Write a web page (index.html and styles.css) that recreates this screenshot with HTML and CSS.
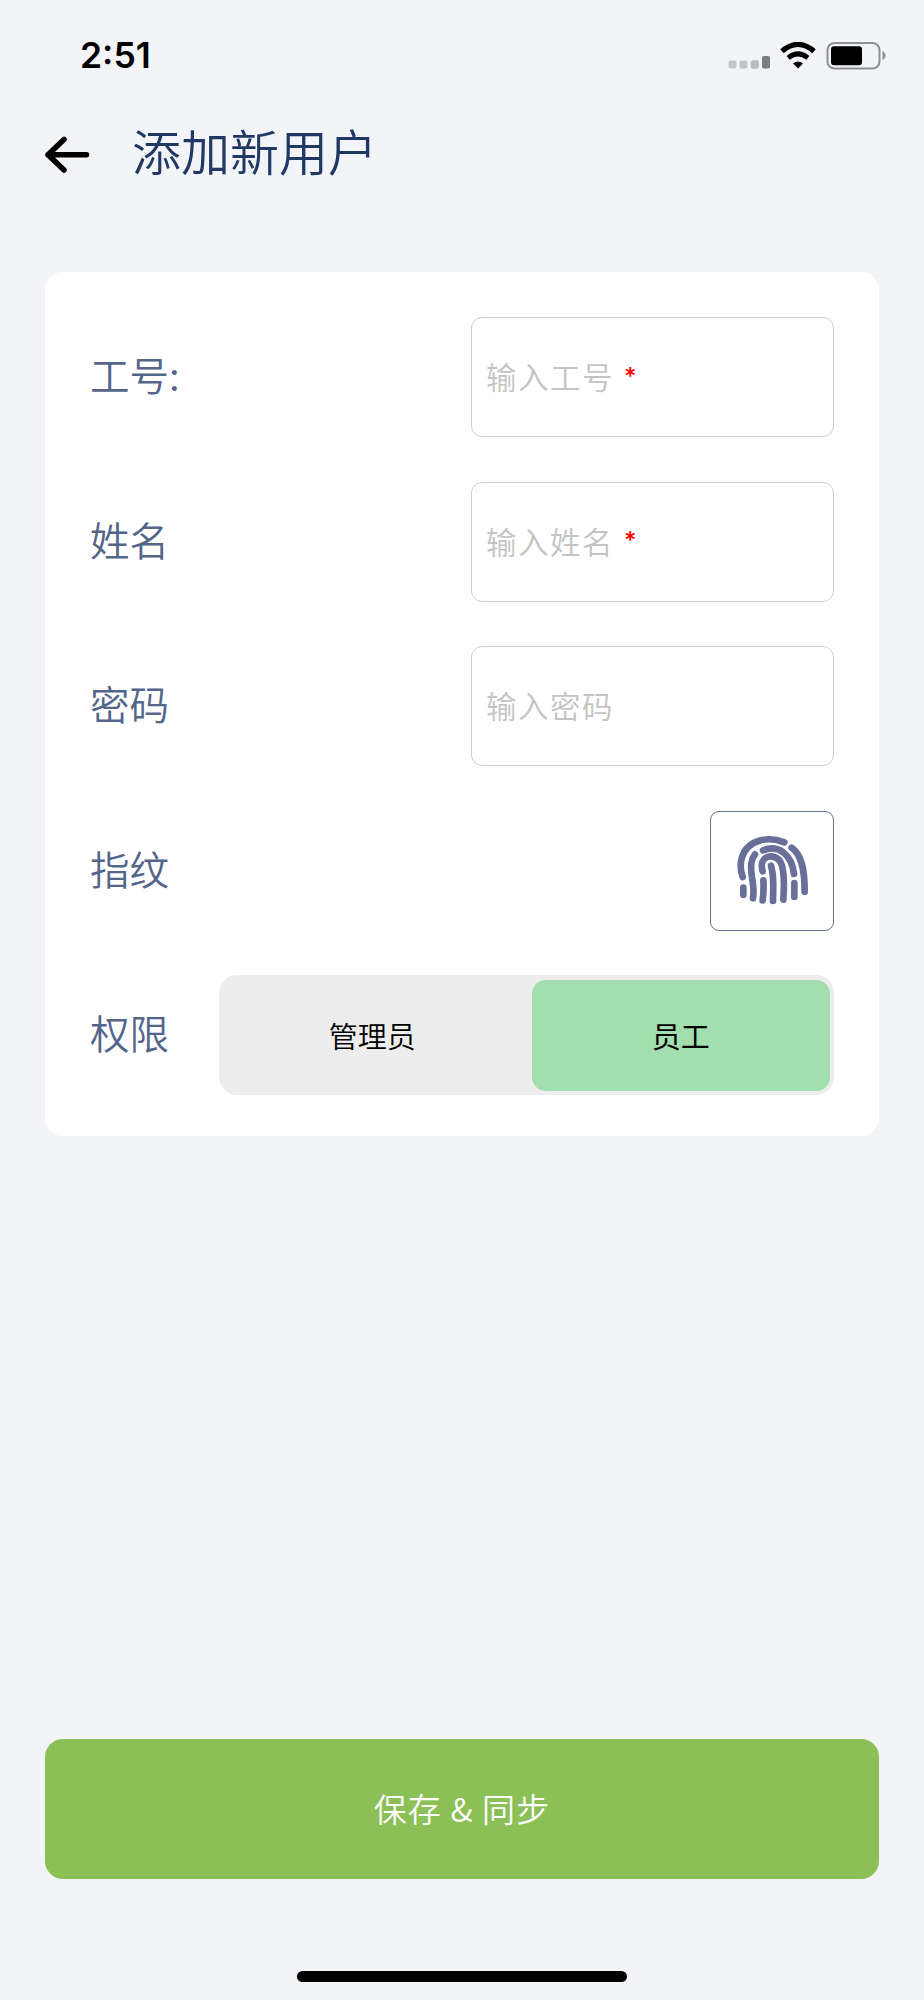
FILE: index.html
```html
<!DOCTYPE html>
<html lang="zh-CN">
  <head>
    <meta charset="UTF-8" />
    <meta name="viewport" content="width=device-width, initial-scale=1.0" />
    <title>添加新用户</title>
    <link rel="stylesheet" href="styles.css">
  </head>
  <body>
    <div class="status-bar">
      <span class="time">2:51</span>
      <div class="status-icons">
        <svg class="signal" width="42" height="28" viewBox="0 0 42 28">
          <g fill="#c4c5c7">
            <rect x="0.5" y="18.5" width="8" height="8" rx="2" />
            <rect x="11.5" y="18.5" width="8" height="8" rx="2" />
            <rect x="22.8" y="18.3" width="8" height="8.4" rx="2" fill="#b9babc" />
          </g>
          <rect x="34" y="14" width="8" height="12.5" rx="1.8" fill="#7c7d7f" />
        </svg>
        <svg class="wifi" width="36" height="28" viewBox="0 0 36 28">
          <g fill="none" stroke="#000">
            <path d="M2 9.2Q18 -4.4 34 9.2" stroke-width="5.2" />
            <path d="M8.2 15.9Q18 8 27.8 15.9" stroke-width="5" />
          </g>
          <path d="M13 21.4Q18 17.4 23 21.4L18 26.4Z" />
        </svg>
        <svg class="battery" width="60" height="28" viewBox="0 0 60 28">
          <rect x="1.5" y="1" width="52" height="25.5" rx="7" fill="none" stroke="#8e8f91" stroke-width="2" />
          <rect x="5" y="4.2" width="31" height="19" rx="3" />
          <path d="M56.500 9Q59.500 10.500 59.500 13.500Q59.500 16.500 56.500 18Z" fill="#8e8f91" />
        </svg>
      </div>
    </div>

    <header class="header">
      <a class="back" href="#" aria-label="返回">
        <svg width="46" height="40" viewBox="0 0 46 40">
          <path d="M42.500 19.700H4M20 4.500L4 19.700L20 35" fill="none" stroke="#000" stroke-width="5.500" stroke-linecap="round" stroke-linejoin="round" />
        </svg>
      </a>
      <h1>添加新用户</h1>
    </header>

    <form class="page-form" id="addUserForm">
      <div class="card">
        <div class="form-row">
          <span class="label">工号:</span>
          <div class="field">输入工号<span class="required">*</span></div>
        </div>
        <div class="form-row">
          <span class="label">姓名</span>
          <div class="field">输入姓名<span class="required">*</span></div>
        </div>
        <div class="form-row">
          <span class="label">密码</span>
          <div class="field">输入密码</div>
        </div>
        <div class="form-row">
          <span class="label">指纹</span>
          <button class="fingerprint" type="button" aria-label="指纹">
            <svg width="75" height="72" viewBox="105 105 225 216">
              <g fill="none" stroke="#686f99" stroke-width="20" stroke-linecap="round">
                <path d="M128 231C120 207 120 190 126 172C142 118 206 108 253 127" />
                <path d="M275 143C304 163 314 205 314 275" />
                <path d="M130 263V284" />
                <path d="M159 295C166 252 149 225 154 190Q156 175 165 163" />
                <path d="M189 151C235 132 275 162 282 222" />
                <path d="M283 249V291" />
                <path d="M188 214C174 165 224 157 242 187C254 211 253 255 250 299" />
                <path d="M190 241Q192 272 188 301" />
                <path d="M213 197C224 232 219 267 219 303" />
              </g>
            </svg>
          </button>
        </div>
        <div class="form-row">
          <span class="label">权限</span>
          <div class="segmented">
            <button class="segment" type="button">管理员</button>
            <button class="segment active" type="button">员工</button>
          </div>
        </div>
      </div>

      <button class="save" type="submit">保存 &amp; 同步</button>
    </form>

    <div class="home-indicator"></div>
  </body>
</html>
```
FILE: styles.css
```css
* {
  box-sizing: border-box;
}

body {
  margin: 0;
  height: 2000px;
  display: flex;
  flex-direction: column;
  background-color: #f3f4f7;
  font-family: "Noto Sans CJK SC", sans-serif;
  font-weight: 350;
}

button {
  border: none;
  padding: 0;
  font-family: inherit;
  font-weight: inherit;
  cursor: pointer;
}

svg {
  display: block;
}

.status-bar {
  height: 112px;
  padding: 0 38px 0 80px;
  display: flex;
  align-items: center;
  justify-content: space-between;
}

.time {
  font-family: Inter, sans-serif;
  font-size: 35.5px;
  font-weight: 600;
  line-height: 1;
}

.status-icons {
  display: flex;
}

.wifi {
  margin: 0 10px;
}

.header {
  height: 86px;
  padding: 0 44px;
  display: flex;
  align-items: center;
  gap: 42px;
}

h1 {
  margin: 0;
  padding-bottom: 11px;
  color: #203864;
  font-size: 49px;
  font-weight: 350;
  line-height: 70px;
}

.page-form {
  flex: 1;
  padding: 74px 45px 0;
  display: flex;
  flex-direction: column;
  justify-content: space-between;
}

.card {
  padding: 45px 45px 41px;
  border-radius: 18px;
  background-color: #fff;
  display: flex;
  flex-direction: column;
  gap: 44.5px;
}

.form-row {
  height: 120px;
  display: flex;
  align-items: center;
  justify-content: space-between;
}

.label {
  padding-bottom: 6px;
  color: #53658a;
  font-size: 39.5px;
  line-height: 60px;
}

.field {
  width: 363px;
  height: 100%;
  padding: 0 14px 2px;
  border: 1px solid #cecece;
  border-radius: 11px;
  display: flex;
  align-items: center;
  color: #c3c3c3;
  font-size: 30.5px;
  letter-spacing: 1.5px;
}

.required {
  margin-left: 10px;
  color: #f00;
  font-family: Inter, sans-serif;
  font-size: 24px;
  font-weight: 500;
}

.fingerprint {
  width: 124px;
  height: 100%;
  border: 1.5px solid #66728e;
  border-radius: 9px;
  background-color: #fff;
  display: flex;
  align-items: center;
  justify-content: center;
}

.segmented {
  width: 615px;
  height: 100%;
  padding: 4.5px;
  border-radius: 18px;
  background-color: #ededed;
  display: flex;
  gap: 9px;
}

.segment {
  flex: 1;
  padding: 0 2px 1px 0;
  border-radius: 14px;
  background-color: transparent;
  color: #000;
  font-size: 29px;
}

.segment.active {
  padding-right: 0;
  background-color: #a2deae;
  font-weight: 400;
}

.save {
  height: 140px;
  padding-bottom: 2px;
  border-radius: 18px;
  background-color: #8bc057;
  color: #fff;
  font-size: 33px;
  letter-spacing: 1.1px;
}

.home-indicator {
  width: 330px;
  height: 11px;
  margin: 92px auto 18px;
  border-radius: 6px;
  background-color: #000;
}
```
